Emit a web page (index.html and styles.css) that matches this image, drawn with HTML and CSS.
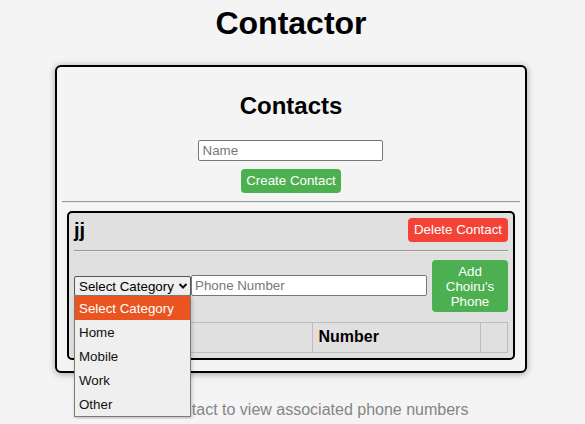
FILE: index.html
```html
<!DOCTYPE html>
<html>
<head>
<meta charset="utf-8">
<link rel="stylesheet" href="styles.css">
</head>
<body>
<h1 class="app-title">Contactor</h1>
<div class="card">
  <h2 class="card-title">Contacts</h2>
  <div class="create-row">
    <input class="name-input" type="text" placeholder="Name">
  </div>
  <div class="create-row">
    <button class="btn btn-green btn-create">Create Contact</button>
  </div>
  <hr class="rule">
  <div class="contact">
    <div class="contact-head">
      <span class="contact-name">jj</span>
      <button class="btn btn-red">Delete Contact</button>
    </div>
    <hr class="rule">
    <div class="phone-row">
      <div class="select-wrap">
        <select class="cat-select">
          <option>Select Category</option>
          <option>Home</option>
          <option>Mobile</option>
          <option>Work</option>
          <option>Other</option>
        </select>
        <svg class="chev" width="10" height="8" viewBox="0 0 10 8"><path d="M1.5 2 L5 5.5 L8.5 2" fill="none" stroke="#111" stroke-width="2"/></svg>
        <ul class="dropdown">
          <li class="opt opt-active">Select Category</li>
          <li class="opt">Home</li>
          <li class="opt">Mobile</li>
          <li class="opt">Work</li>
          <li class="opt">Other</li>
        </ul>
      </div>
      <input class="phone-input" type="text" placeholder="Phone Number">
      <button class="btn btn-green btn-add">Add Choiru's Phone</button>
    </div>
    <table class="phones">
      <thead>
        <tr><th class="col-cat">Category</th><th class="col-num">Number</th><th class="col-act"></th></tr>
      </thead>
    </table>
  </div>
</div>
<p class="hint">Click a contact to view associated phone numbers</p>
</body>
</html>
```
FILE: styles.css
```css
html, body {
  margin: 0;
  padding: 0;
  background: #f4f4f4;
  font-family: "Liberation Sans", Arial, sans-serif;
  color: #000;
}
body {
  padding-right: 3px;
}
.app-title {
  font-size: 32px;
  font-weight: bold;
  text-align: center;
  margin: 5px 0 23px;
}
.card {
  box-sizing: border-box;
  width: 472px;
  margin: 0 auto;
  border: 2px solid #000;
  border-radius: 6px;
  padding: 5px;
  background: #f4f4f4;
  box-shadow: 0 1px 7px rgba(0, 0, 0, 0.35);
}
.card-title {
  font-size: 24px;
  font-weight: bold;
  text-align: center;
  margin: 20px 0 20px;
}
.create-row {
  display: flex;
  justify-content: center;
  padding-right: 2px;
}
.name-input {
  box-sizing: border-box;
  width: 185px;
  height: 21px;
  border: 1px solid #767676;
  border-radius: 2px;
  padding: 1px 4px;
  font-family: "Liberation Sans", Arial, sans-serif;
  font-size: 13.33px;
  background: #fff;
  margin: 0 0 8px;
}
.name-input::placeholder, .phone-input::placeholder {
  color: #777;
}
.btn {
  border: none;
  border-radius: 4px;
  color: #fff;
  font-family: "Liberation Sans", Arial, sans-serif;
  font-size: 13.33px;
  line-height: 15px;
  padding: 0;
  box-sizing: border-box;
}
.btn-green { background: #4caf50; }
.btn-red { background: #f44336; }
.btn-create {
  width: 100px;
  height: 24px;
  padding-bottom: 1px;
  margin-left: 2px;
}
.rule {
  border: 0;
  border-top: 1px solid #9a9a9a;
  border-bottom: 1px solid #e8e8e8;
  height: 0;
  margin: 8px 0;
}
.contact {
  border: 2px solid #000;
  border-radius: 5px;
  background: #e0e0e0;
  padding: 5px;
  margin: 8px 5px 6px;
}
.contact-head {
  display: flex;
  justify-content: space-between;
  align-items: center;
  height: 24px;
}
.contact-name {
  font-size: 20px;
  font-weight: bold;
}
.contact-head .btn-red {
  width: 100px;
  height: 24px;
  padding-bottom: 1px;
}
.phone-row {
  display: flex;
  align-items: center;
}
.select-wrap {
  position: relative;
  width: 117px;
  height: 20px;
}
.cat-select {
  -webkit-appearance: none;
  appearance: none;
  box-sizing: border-box;
  width: 117px;
  height: 20px;
  border: 1px solid #555;
  border-radius: 2px;
  background: #efefef;
  font-family: "Liberation Sans", Arial, sans-serif;
  font-size: 13.33px;
  color: #000;
  padding: 0 0 0 4px;
  margin: 0;
}
.chev {
  position: absolute;
  left: 104px;
  top: 6px;
}
.dropdown {
  position: absolute;
  left: 0;
  top: 19px;
  width: 117px;
  box-sizing: border-box;
  margin: 0;
  padding: 0;
  list-style: none;
  background: #efefef;
  border: 1px solid #7a7a7a;
  box-shadow: 1px 2px 4px rgba(0, 0, 0, 0.2);
  z-index: 10;
}
.opt {
  box-sizing: border-box;
  height: 24px;
  line-height: 24px;
  padding: 1px 0 0 4px;
  font-size: 13.33px;
  color: #111;
}
.opt-active {
  background: #e95420;
  color: #fff;
}
.phone-input {
  box-sizing: border-box;
  width: 236px;
  height: 21px;
  border: 1px solid #767676;
  border-radius: 2px;
  padding: 1px 3px;
  font-family: "Liberation Sans", Arial, sans-serif;
  font-size: 13.33px;
  background: #fff;
  margin: -1px 0 0 0;
}
.btn-add {
  width: 76px;
  height: 52px;
  margin-left: 5px;
  padding: 0 8px;
}
.phones {
  width: 100%;
  border-collapse: collapse;
  margin-top: 10px;
}
.phones th {
  border: 1px solid #bdbdbd;
  text-align: left;
  font-size: 16px;
  font-weight: bold;
  padding: 5px 5px 6px;
  height: 18px;
}
.col-cat { width: 228px; }
.col-num { width: 157px; }
.col-act { width: 16px; }
.hint {
  text-align: center;
  color: #858585;
  font-size: 16px;
  margin: 28px 0 0;
}
```
